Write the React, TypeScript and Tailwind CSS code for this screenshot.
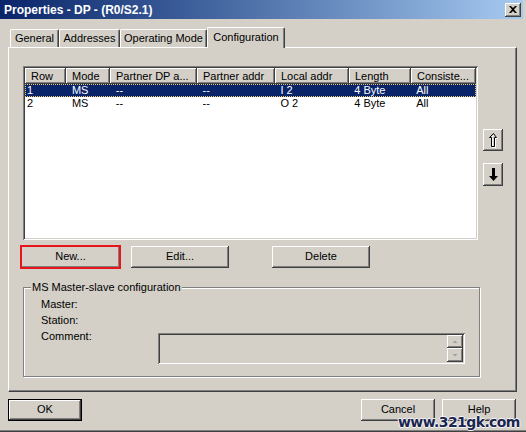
import React from "react";

const FONT = "font-['Liberation_Sans','Arial',sans-serif]";

function Btn({ label, w, className = "" }: { label: string; w: string; className?: string }) {
  return (
    <div
      className={`${w} h-[22px] bg-[#d4d0c8] flex items-center justify-center shadow-[inset_-1px_-1px_#404040,inset_1px_1px_#ffffff,inset_-2px_-2px_#808080,inset_2px_2px_#d4d0c8] ${className}`}
    >
      <span className="leading-none pb-[1px]">{label}</span>
    </div>
  );
}

const cols = [
  { t: "Row", w: 41 },
  { t: "Mode", w: 44 },
  { t: "Partner DP a...", w: 87 },
  { t: "Partner addr", w: 78 },
  { t: "Local addr", w: 74 },
  { t: "Length", w: 62 },
  { t: "Consiste...", w: 65 },
];

const rows = [
  ["1", "MS", "--", "--", "I 2", "4 Byte", "All"],
  ["2", "MS", "--", "--", "O 2", "4 Byte", "All"],
];

export default function App() {
  return (
    <div
      className={`relative w-[526px] h-[432px] bg-[#d4d0c8] overflow-hidden text-[11px] text-black ${FONT} flex flex-col shadow-[inset_0_-1px_#404040,inset_0_-2px_#808080]`}
    >
      {/* Title bar */}
      <div className="h-[19px] mr-[3px] flex items-center pl-[4px] bg-linear-to-r from-[#0a246a] to-[#a6caf0]">
        <span className="text-white font-bold text-[12px] leading-none">Properties - DP - (R0/S2.1)</span>
        <div className="ml-auto mr-[2px] w-[16px] h-[14px] bg-[#d4d0c8] flex items-center justify-center shadow-[inset_-1px_-1px_#404040,inset_1px_1px_#ffffff,inset_-2px_-2px_#808080]">
          <svg width="8" height="7" viewBox="0 0 8 7">
            <path d="M0 0h2l2 2l2-2h2l-3 3.5l3 3.5h-2l-2-2l-2 2h-2l3-3.5z" fill="#000" />
          </svg>
        </div>
      </div>

      {/* Tabs */}
      <div className="h-[28px] flex items-end pl-[10px] relative z-10">
        <div className="w-[49px] h-[18px] flex items-center justify-center border-t border-l border-t-white border-l-white border-r border-r-[#404040] shadow-[inset_-1px_0_#808080] rounded-tl-[2px] rounded-tr-[2px]">
          General
        </div>
        <div className="w-[61px] h-[18px] flex items-center justify-center border-t border-l border-t-white border-l-white border-r border-r-[#404040] shadow-[inset_-1px_0_#808080] rounded-tl-[2px] rounded-tr-[2px]">
          Addresses
        </div>
        <div className="w-[87px] h-[18px] flex items-center justify-center border-t border-l border-t-white border-l-white border-r border-r-[#404040] shadow-[inset_-1px_0_#808080] rounded-tl-[2px] rounded-tr-[2px]">
          Operating Mode
        </div>
        <div className="w-[78px] h-[21px] mb-[-1px] bg-[#d4d0c8] flex items-center justify-center pb-[2px] border-t border-l border-t-white border-l-white border-r border-r-[#404040] shadow-[inset_-1px_0_#808080] rounded-tl-[2px] rounded-tr-[2px]">
          Configuration
        </div>
      </div>

      {/* Tab panel */}
      <div className="ml-[8px] w-[509px] h-[345px] border-t border-l border-t-white border-l-white border-r border-b border-r-[#404040] border-b-[#404040] shadow-[inset_-1px_-1px_#808080] pl-[12px] pt-[18px] flex flex-col">
        <div className="flex ml-[2px]">
          {/* List box */}
          <div className="w-[455px] h-[174px] bg-white p-[2px] shadow-[inset_1px_1px_#808080,inset_-1px_-1px_#ffffff,inset_2px_2px_#404040,inset_-2px_-2px_#d4d0c8]">
            <div className="flex h-[16px]">
              {cols.map((c) => (
                <div
                  key={c.t}
                  style={{ width: c.w }}
                  className="h-[16px] bg-[#d4d0c8] flex items-center pl-[6px] whitespace-nowrap overflow-hidden shadow-[inset_-1px_-1px_#404040,inset_1px_1px_#ffffff,inset_-2px_-2px_#808080]"
                >
                  {c.t}
                </div>
              ))}
            </div>
            {rows.map((r, i) => (
              <div
                key={i}
                className={
                  i === 0
                    ? "flex h-[13px] bg-[#0a246a] text-white border border-dotted border-[#e8c870]"
                    : "flex h-[13px] border border-transparent"
                }
              >
                {r.map((v, j) => (
                  <div
                    key={j}
                    style={{ width: j === 0 ? cols[j].w - 1 : cols[j].w }}
                    className={j === 0 ? "leading-[11px] pl-[1px] whitespace-nowrap" : "leading-[11px] pl-[6px] whitespace-nowrap"}
                  >
                    {v}
                  </div>
                ))}
              </div>
            ))}
          </div>
          {/* Up / down buttons */}
          <div className="ml-[5px] pt-[63px] flex flex-col gap-[12px]">
            <div className="w-[20px] h-[22px] bg-[#d4d0c8] flex items-center justify-center shadow-[inset_-1px_-1px_#404040,inset_1px_1px_#ffffff,inset_-2px_-2px_#808080,inset_2px_2px_#d4d0c8]">
              <svg width="9" height="15" viewBox="0 0 9 15">
                <path d="M5.5 1.5L8.5 5.5H6.5V14.5H3.5V5.5H1.5Z" fill="none" stroke="#ffffff" strokeWidth="1" />
                <path d="M4.5 0.5L7.5 4.5H5.5V13.5H2.5V4.5H0.5Z" fill="none" stroke="#000000" strokeWidth="1" />
              </svg>
            </div>
            <div className="w-[20px] h-[23px] bg-[#d4d0c8] flex items-center justify-center shadow-[inset_-1px_-1px_#404040,inset_1px_1px_#ffffff,inset_-2px_-2px_#808080,inset_2px_2px_#d4d0c8]">
              <svg width="9" height="14" viewBox="0 0 9 14">
                <path d="M3 0H6V8H9L4.5 13L0 8H3Z" fill="#000000" />
              </svg>
            </div>
          </div>
        </div>

        {/* Action buttons */}
        <div className="flex mt-[6px]">
          <div className="relative">
            <Btn label="New..." w="w-[99px]" />
            <div className="absolute -inset-[1px] border-2 border-[#e8141c]" />
          </div>
          <Btn label="Edit..." w="w-[98px]" className="ml-[11px]" />
          <Btn label="Delete" w="w-[98px]" className="ml-[43px]" />
        </div>

        {/* Group box */}
        <div className="relative ml-[2px] mt-[19px] w-[457px] h-[90px] border border-[#808080] shadow-[inset_1px_1px_#ffffff,1px_1px_#ffffff] pl-[17px] pt-[8px]">
          <div className="absolute left-[7px] top-[-8px] px-[1px] bg-[#d4d0c8] leading-[14px] whitespace-nowrap">
            MS Master-slave configuration
          </div>
          <div className="h-[16px] leading-[16px]">Master:</div>
          <div className="h-[16px] leading-[16px]">Station:</div>
          <div className="flex items-start">
            <div className="w-[117px] h-[16px] leading-[16px]">Comment:</div>
            <div className="mt-[5px] w-[307px] h-[31px] p-[2px] flex justify-end shadow-[inset_1px_1px_#808080,inset_-1px_-1px_#ffffff,inset_2px_2px_#404040,inset_-2px_-2px_#d4d0c8]">
              <div className="w-[16px] flex flex-col">
                <div className="h-[13px] bg-[#d4d0c8] flex items-center justify-center shadow-[inset_-1px_-1px_#404040,inset_1px_1px_#ffffff,inset_-2px_-2px_#808080]">
                  <svg width="6" height="4" viewBox="0 0 6 4">
                    <path d="M3 0.5L5.5 3H0.5Z" fill="#a0a0a0" />
                  </svg>
                </div>
                <div className="h-[14px] bg-[#d4d0c8] flex items-center justify-center shadow-[inset_-1px_-1px_#404040,inset_1px_1px_#ffffff,inset_-2px_-2px_#808080]">
                  <svg width="6" height="4" viewBox="0 0 6 4">
                    <path d="M0.5 1H5.5L3 3.5Z" fill="#a0a0a0" />
                  </svg>
                </div>
              </div>
            </div>
          </div>
        </div>
      </div>

      {/* Bottom buttons */}
      <div className="flex mt-[7px] pl-[8px] pr-[10px]">
        <div className="w-[74px] h-[22px] border border-black">
          <Btn label="OK" w="w-[72px] h-[20px]" className="!h-[20px]" />
        </div>
        <Btn label="Cancel" w="w-[74px]" className="ml-auto" />
        <Btn label="Help" w="w-[74px]" className="ml-[7px]" />
      </div>

      {/* Watermark */}
      <div className="absolute left-[398px] top-[414px] font-['DejaVu_Sans',sans-serif] font-bold text-[14px] tracking-[-0.6px] text-[#1a2550] leading-[16px] [text-shadow:1px_0_0_#f4f4f4,-1px_0_0_#f4f4f4,0_1px_0_#f4f4f4,0_-1px_0_#f4f4f4]">
        www.321gk.com
      </div>
    </div>
  );
}
